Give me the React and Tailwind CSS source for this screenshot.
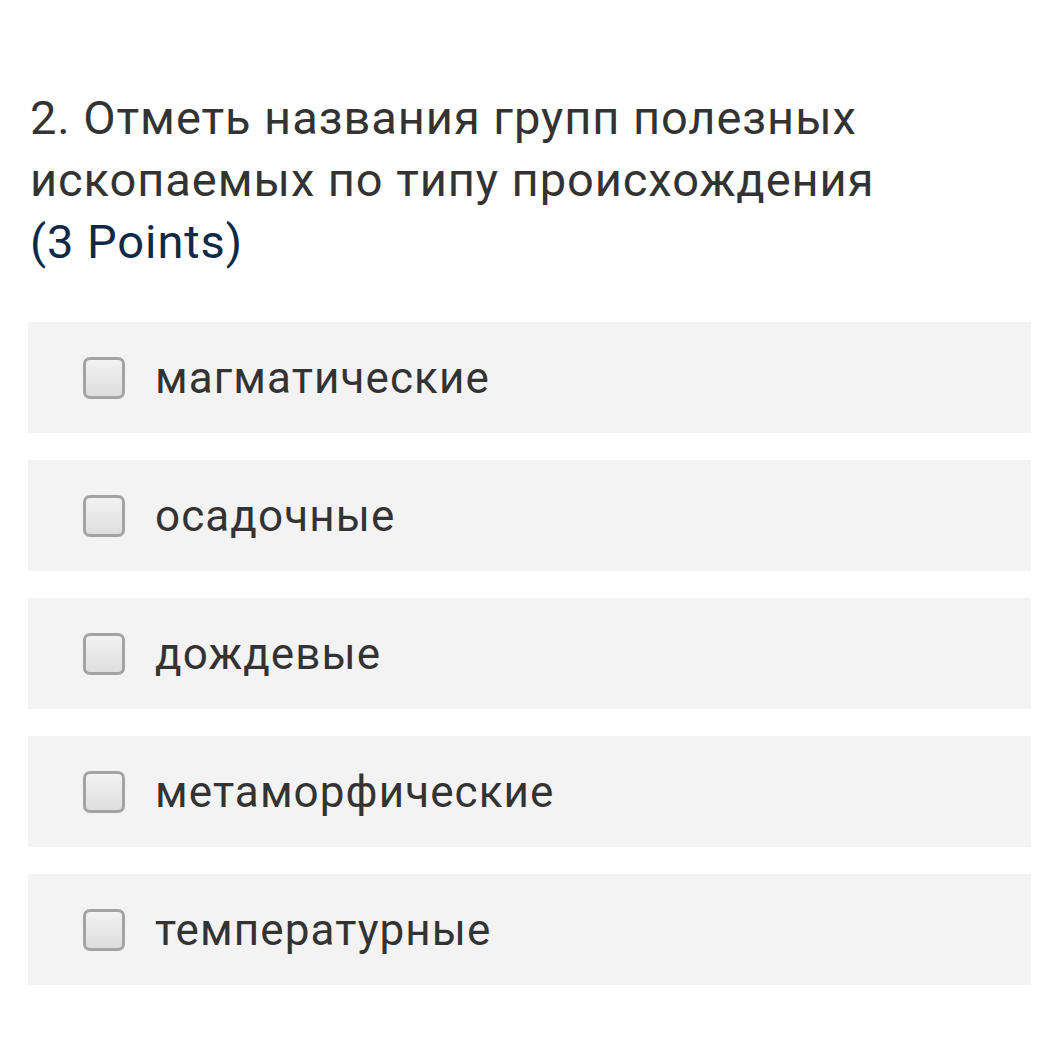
const options = [
    "магматические",
    "осадочные",
    "дождевые",
    "метаморфические",
    "температурные",
];

function Checkbox() {
    return (
        <span className="w-[42px] h-[42px] shrink-0 rounded-[7px] border-[3px] border-[#a3a3a3] bg-gradient-to-b from-[#f2f2f2] to-[#dedede]" />
    );
}

export default function App() {
    return (
        <div className="min-h-[1041px] bg-white font-['Roboto',sans-serif] pt-[87px] px-[28px]">
            <h1 className="pl-[2px] text-[47px] leading-[62px] tracking-[0.02em] text-[#333333] font-normal">
                2. Отметь названия групп полезных
                <br />
                ископаемых по типу происхождения
                <br />
                <span className="text-[#0f2a47]">(3 Points)</span>
            </h1>
            <div className="mt-[49px] flex flex-col gap-[27px] w-[1003px]">
                {options.map((opt) => (
                    <label
                        key={opt}
                        className="h-[111px] bg-[#f3f3f3] flex items-center pl-[55px] gap-[30px]"
                    >
                        <Checkbox />
                        <span className="text-[44px] tracking-[0.025em] text-[#333333]">{opt}</span>
                    </label>
                ))}
            </div>
        </div>
    );
}
